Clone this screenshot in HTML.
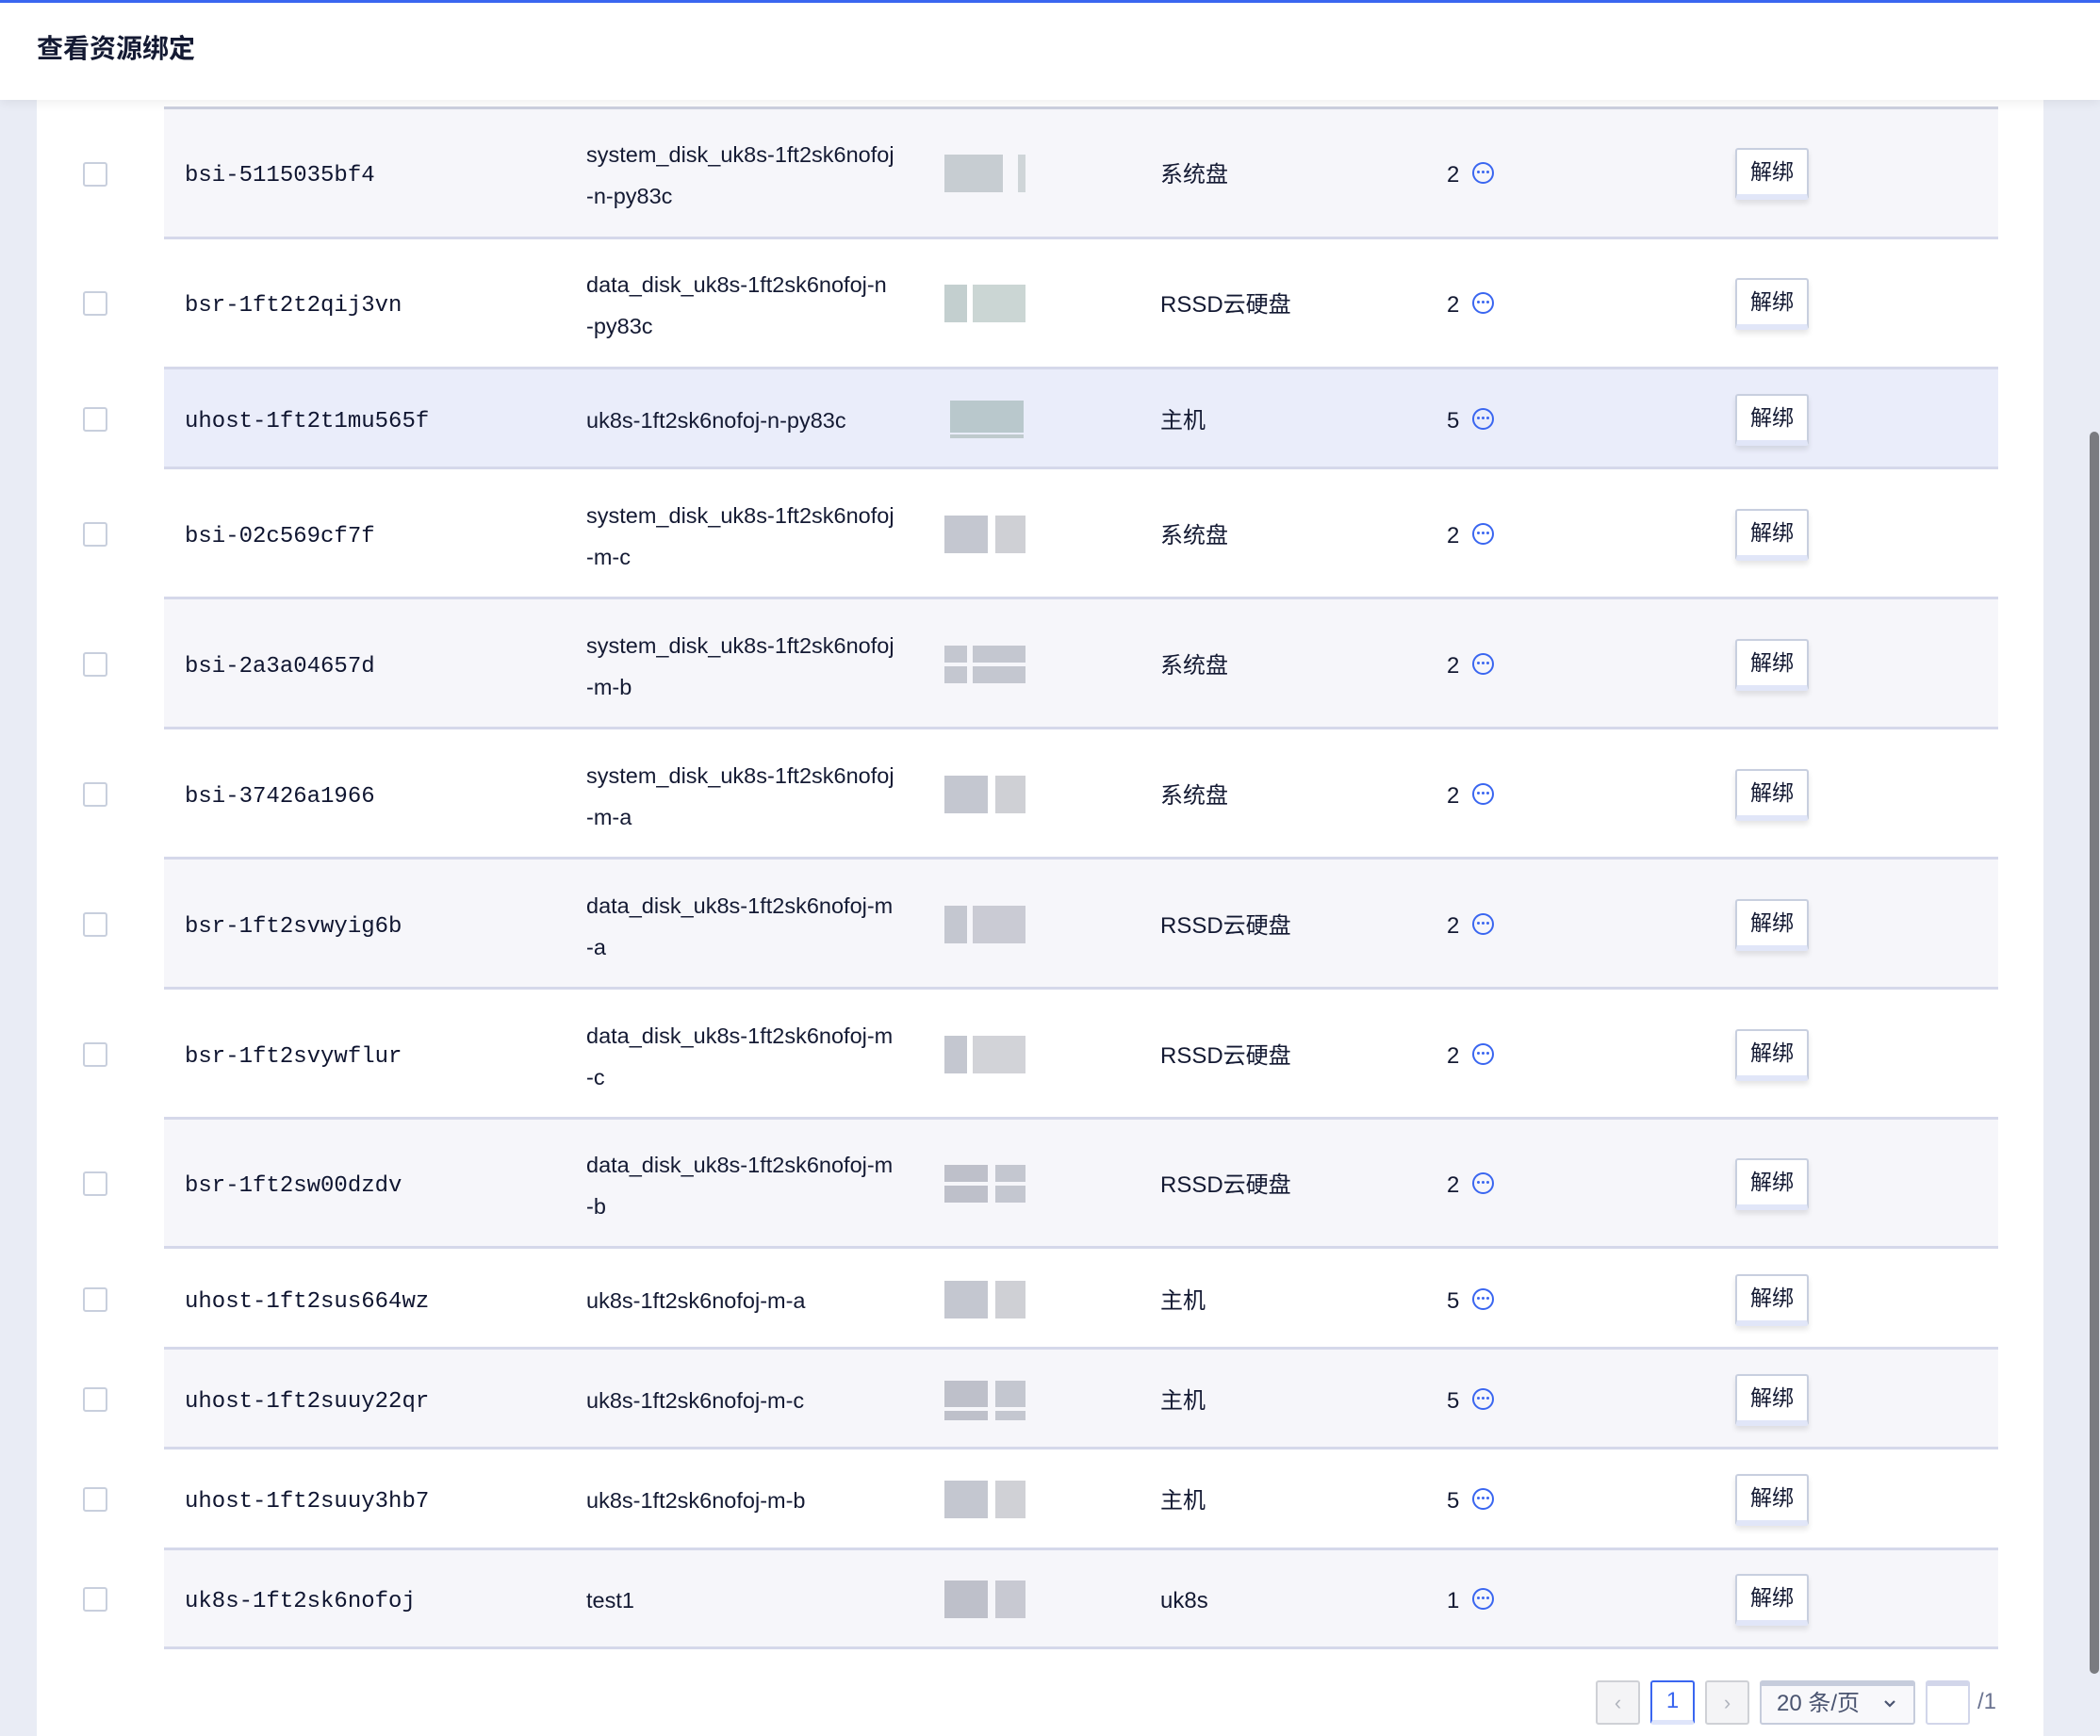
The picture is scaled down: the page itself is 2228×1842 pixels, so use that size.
<!DOCTYPE html>
<html><head><meta charset="utf-8"><style>
*{margin:0;padding:0;box-sizing:border-box}
body{width:2228px;height:1842px;background:#e9ecf5;position:relative;overflow:hidden;font-family:"Liberation Sans","Noto Sans CJK SC",sans-serif;color:#141a33}
.top{position:absolute;left:0;top:0;width:2228px;height:3px;background:#3a66f0;z-index:5}
.hdr{position:absolute;left:0;top:0;width:2228px;height:106px;background:#fff;z-index:4;box-shadow:0 4px 10px rgba(0,0,0,.06)}
.hdr h1{position:absolute;left:39px;top:30px;font-size:28px;font-weight:bold;color:#141a33;font-family:"Liberation Sans","Noto Sans CJK SC",sans-serif}
.panel{position:absolute;left:39px;top:0;width:2129px;height:1842px;background:#fff}
.row{position:absolute;left:174px;width:1946px;border-bottom:3px solid #d5d8ea}
.row.g{background:#f6f6fa}.row.h{background:#eaedfa}
.first{border-top:3px solid #ccd0df}
.cb{position:absolute;left:88px;width:26px;height:26px;border:2px solid #c8cfdd;border-radius:3px;background:#fff}
.id{position:absolute;left:196px;font-family:"Liberation Mono",monospace;font-size:24px;line-height:30px;margin-top:3px;color:#0f1530}
.nm{position:absolute;left:622px;font-size:23.5px;line-height:44px;margin-top:1px}
.bl{position:absolute;height:40px}
.bl i{position:absolute;top:0;height:40px;background:#c4c7d0}
.tp{position:absolute;left:1231px;font-size:24px;line-height:30px;margin-top:2px}
.ct{position:absolute;left:1535px;font-size:24px;line-height:30px;margin-top:2px}
.ic{position:absolute;left:1562px;width:23px;height:23px;border:2.5px solid #3a66f0;border-radius:50%}
.ic:after{content:"";position:absolute;left:3px;top:7px;width:3px;height:3px;background:#3a66f0;border-radius:50%;box-shadow:5px 0 #3a66f0,10px 0 #3a66f0}
.bt{position:absolute;left:1841px;width:78px;height:55px;border:2px solid #c8cfdf;border-bottom:6px solid #e1e6f8;border-radius:3px;background:#fff;font-size:23px;text-align:center;line-height:46px;box-shadow:0 4px 6px rgba(0,0,0,.1)}
.pg{position:absolute;top:1783px;height:47px;border:2px solid #cfd1d6;border-radius:3px;background:#f4f4f6;text-align:center;font-size:22px;line-height:43px;color:#b0b4bd}
.sb{position:absolute;left:2217px;top:458px;width:10px;height:1318px;background:#7a7b80;border-radius:5px}
</style></head><body>
<div class="panel"></div>
<div class="top"></div>
<div class="hdr"><h1>查看资源绑定</h1></div>

<div class="row g first" style="top:113px;height:141px"></div>
<div class="row" style="top:254px;height:138px"></div>
<div class="row h" style="top:392px;height:106px"></div>
<div class="row" style="top:498px;height:138px"></div>
<div class="row g" style="top:636px;height:138px"></div>
<div class="row" style="top:774px;height:138px"></div>
<div class="row g" style="top:912px;height:138px"></div>
<div class="row" style="top:1050px;height:138px"></div>
<div class="row g" style="top:1188px;height:137px"></div>
<div class="row" style="top:1325px;height:107px"></div>
<div class="row g" style="top:1432px;height:106px"></div>
<div class="row" style="top:1538px;height:107px"></div>
<div class="row g" style="top:1645px;height:105px"></div>

<div class="cb" style="top:172px"></div><div class="id" style="top:169px">bsi-5115035bf4</div>
<div class="nm" style="top:141px">system_disk_uk8s-1ft2sk6nofoj<br>-n-py83c</div>
<div class="bl" style="left:1002px;top:164px;width:86px"><i style="left:0;width:62px;background:#c7cdd2"></i><i style="left:78px;width:8px;background:#cfd5d8"></i></div>
<div class="tp" style="top:169px">系统盘</div><div class="ct" style="top:169px">2</div><div class="ic" style="top:172px"></div><div class="bt" style="top:157px">解绑</div>

<div class="cb" style="top:309px"></div><div class="id" style="top:307px">bsr-1ft2t2qij3vn</div>
<div class="nm" style="top:279px">data_disk_uk8s-1ft2sk6nofoj-n<br>-py83c</div>
<div class="bl" style="left:1002px;top:302px;width:86px"><i style="left:0;width:24px;background:#c3cfcf"></i><i style="left:30px;width:56px;background:#cbd6d4"></i></div>
<div class="tp" style="top:307px">RSSD云硬盘</div><div class="ct" style="top:307px">2</div><div class="ic" style="top:310px"></div><div class="bt" style="top:295px">解绑</div>

<div class="cb" style="top:432px"></div><div class="id" style="top:430px">uhost-1ft2t1mu565f</div>
<div class="nm" style="top:423px">uk8s-1ft2sk6nofoj-n-py83c</div>
<div class="bl" style="left:1008px;top:425px;width:78px"><i style="left:0;width:78px;height:34px;background:#b9c8cc"></i><i style="left:0;top:36px;width:78px;height:4px;background:#bfcacd"></i></div>
<div class="tp" style="top:430px">主机</div><div class="ct" style="top:430px">5</div><div class="ic" style="top:433px"></div><div class="bt" style="top:418px">解绑</div>

<div class="cb" style="top:554px"></div><div class="id" style="top:552px">bsi-02c569cf7f</div>
<div class="nm" style="top:524px">system_disk_uk8s-1ft2sk6nofoj<br>-m-c</div>
<div class="bl" style="left:1002px;top:547px;width:86px"><i style="left:0;width:46px"></i><i style="left:54px;width:32px;background:#cfd0d5"></i></div>
<div class="tp" style="top:552px">系统盘</div><div class="ct" style="top:552px">2</div><div class="ic" style="top:555px"></div><div class="bt" style="top:540px">解绑</div>

<div class="cb" style="top:692px"></div><div class="id" style="top:690px">bsi-2a3a04657d</div>
<div class="nm" style="top:662px">system_disk_uk8s-1ft2sk6nofoj<br>-m-b</div>
<div class="bl" style="left:1002px;top:685px;width:86px"><i style="left:0;width:24px;height:18px"></i><i style="left:30px;width:56px;height:18px"></i><i style="left:0;top:22px;width:24px;height:18px"></i><i style="left:30px;top:22px;width:56px;height:18px"></i></div>
<div class="tp" style="top:690px">系统盘</div><div class="ct" style="top:690px">2</div><div class="ic" style="top:693px"></div><div class="bt" style="top:678px">解绑</div>

<div class="cb" style="top:830px"></div><div class="id" style="top:828px">bsi-37426a1966</div>
<div class="nm" style="top:800px">system_disk_uk8s-1ft2sk6nofoj<br>-m-a</div>
<div class="bl" style="left:1002px;top:823px;width:86px"><i style="left:0;width:46px"></i><i style="left:54px;width:32px;background:#cfd0d5"></i></div>
<div class="tp" style="top:828px">系统盘</div><div class="ct" style="top:828px">2</div><div class="ic" style="top:831px"></div><div class="bt" style="top:816px">解绑</div>

<div class="cb" style="top:968px"></div><div class="id" style="top:966px">bsr-1ft2svwyig6b</div>
<div class="nm" style="top:938px">data_disk_uk8s-1ft2sk6nofoj-m<br>-a</div>
<div class="bl" style="left:1002px;top:961px;width:86px"><i style="left:0;width:24px"></i><i style="left:30px;width:56px;background:#cacbd4"></i></div>
<div class="tp" style="top:966px">RSSD云硬盘</div><div class="ct" style="top:966px">2</div><div class="ic" style="top:969px"></div><div class="bt" style="top:954px">解绑</div>

<div class="cb" style="top:1106px"></div><div class="id" style="top:1104px">bsr-1ft2svywflur</div>
<div class="nm" style="top:1076px">data_disk_uk8s-1ft2sk6nofoj-m<br>-c</div>
<div class="bl" style="left:1002px;top:1099px;width:86px"><i style="left:0;width:24px"></i><i style="left:30px;width:56px;background:#d2d3d8"></i></div>
<div class="tp" style="top:1104px">RSSD云硬盘</div><div class="ct" style="top:1104px">2</div><div class="ic" style="top:1107px"></div><div class="bt" style="top:1092px">解绑</div>

<div class="cb" style="top:1243px"></div><div class="id" style="top:1241px">bsr-1ft2sw00dzdv</div>
<div class="nm" style="top:1213px">data_disk_uk8s-1ft2sk6nofoj-m<br>-b</div>
<div class="bl" style="left:1002px;top:1236px;width:86px"><i style="left:0;width:46px;height:18px;background:#bec0ca"></i><i style="left:54px;width:32px;height:18px"></i><i style="left:0;top:22px;width:46px;height:18px;background:#bec0ca"></i><i style="left:54px;top:22px;width:32px;height:18px"></i></div>
<div class="tp" style="top:1241px">RSSD云硬盘</div><div class="ct" style="top:1241px">2</div><div class="ic" style="top:1244px"></div><div class="bt" style="top:1229px">解绑</div>

<div class="cb" style="top:1366px"></div><div class="id" style="top:1364px">uhost-1ft2sus664wz</div>
<div class="nm" style="top:1357px">uk8s-1ft2sk6nofoj-m-a</div>
<div class="bl" style="left:1002px;top:1359px;width:86px"><i style="left:0;width:46px"></i><i style="left:54px;width:32px;background:#cfd0d5"></i></div>
<div class="tp" style="top:1364px">主机</div><div class="ct" style="top:1364px">5</div><div class="ic" style="top:1367px"></div><div class="bt" style="top:1352px">解绑</div>

<div class="cb" style="top:1472px"></div><div class="id" style="top:1470px">uhost-1ft2suuy22qr</div>
<div class="nm" style="top:1463px">uk8s-1ft2sk6nofoj-m-c</div>
<div class="bl" style="left:1002px;top:1465px;width:86px"><i style="left:0;width:46px;height:28px;background:#bec0ca"></i><i style="left:54px;width:32px;height:28px"></i><i style="left:0;top:32px;width:46px;height:10px;background:#bec0ca"></i><i style="left:54px;top:32px;width:32px;height:10px"></i></div>
<div class="tp" style="top:1470px">主机</div><div class="ct" style="top:1470px">5</div><div class="ic" style="top:1473px"></div><div class="bt" style="top:1458px">解绑</div>

<div class="cb" style="top:1578px"></div><div class="id" style="top:1576px">uhost-1ft2suuy3hb7</div>
<div class="nm" style="top:1569px">uk8s-1ft2sk6nofoj-m-b</div>
<div class="bl" style="left:1002px;top:1571px;width:86px"><i style="left:0;width:46px"></i><i style="left:54px;width:32px;background:#d0d1d6"></i></div>
<div class="tp" style="top:1576px">主机</div><div class="ct" style="top:1576px">5</div><div class="ic" style="top:1579px"></div><div class="bt" style="top:1564px">解绑</div>

<div class="cb" style="top:1684px"></div><div class="id" style="top:1682px">uk8s-1ft2sk6nofoj</div>
<div class="nm" style="top:1675px">test1</div>
<div class="bl" style="left:1002px;top:1677px;width:86px"><i style="left:0;width:46px;background:#bec0ca"></i><i style="left:54px;width:32px;background:#c8c9d2"></i></div>
<div class="tp" style="top:1682px">uk8s</div><div class="ct" style="top:1682px">1</div><div class="ic" style="top:1685px"></div><div class="bt" style="top:1670px">解绑</div>

<div class="pg" style="left:1693px;width:47px">‹</div>
<div class="pg" style="left:1751px;width:47px;border-color:#3a66f0;background:#fff;color:#3a66f0;border-bottom:5px solid #dfe5fa;border-bottom-color:#dfe5fa"><span style="display:block;line-height:40px;font-size:24px">1</span></div>
<div class="pg" style="left:1809px;width:47px">›</div>
<div class="pg" style="left:1867px;width:165px;border-color:#c6ccdc;border-top-width:6px;background:#f8f8fb;color:#4a5470;font-size:24px;text-align:left;padding-left:16px;line-height:37px">20 条/页<svg style="position:absolute;right:18px;top:14px" width="14" height="10" viewBox="0 0 14 10"><path d="M2 2 L7 7 L12 2" fill="none" stroke="#4a5470" stroke-width="2.2"/></svg></div>
<div class="pg" style="left:2043px;width:47px;border-color:#d2d6ea;border-top-width:6px;background:#fff"></div>
<div style="position:absolute;left:2098px;top:1792px;font-size:24px;color:#6a7390">/1</div>

<div class="sb"></div>
</body></html>
